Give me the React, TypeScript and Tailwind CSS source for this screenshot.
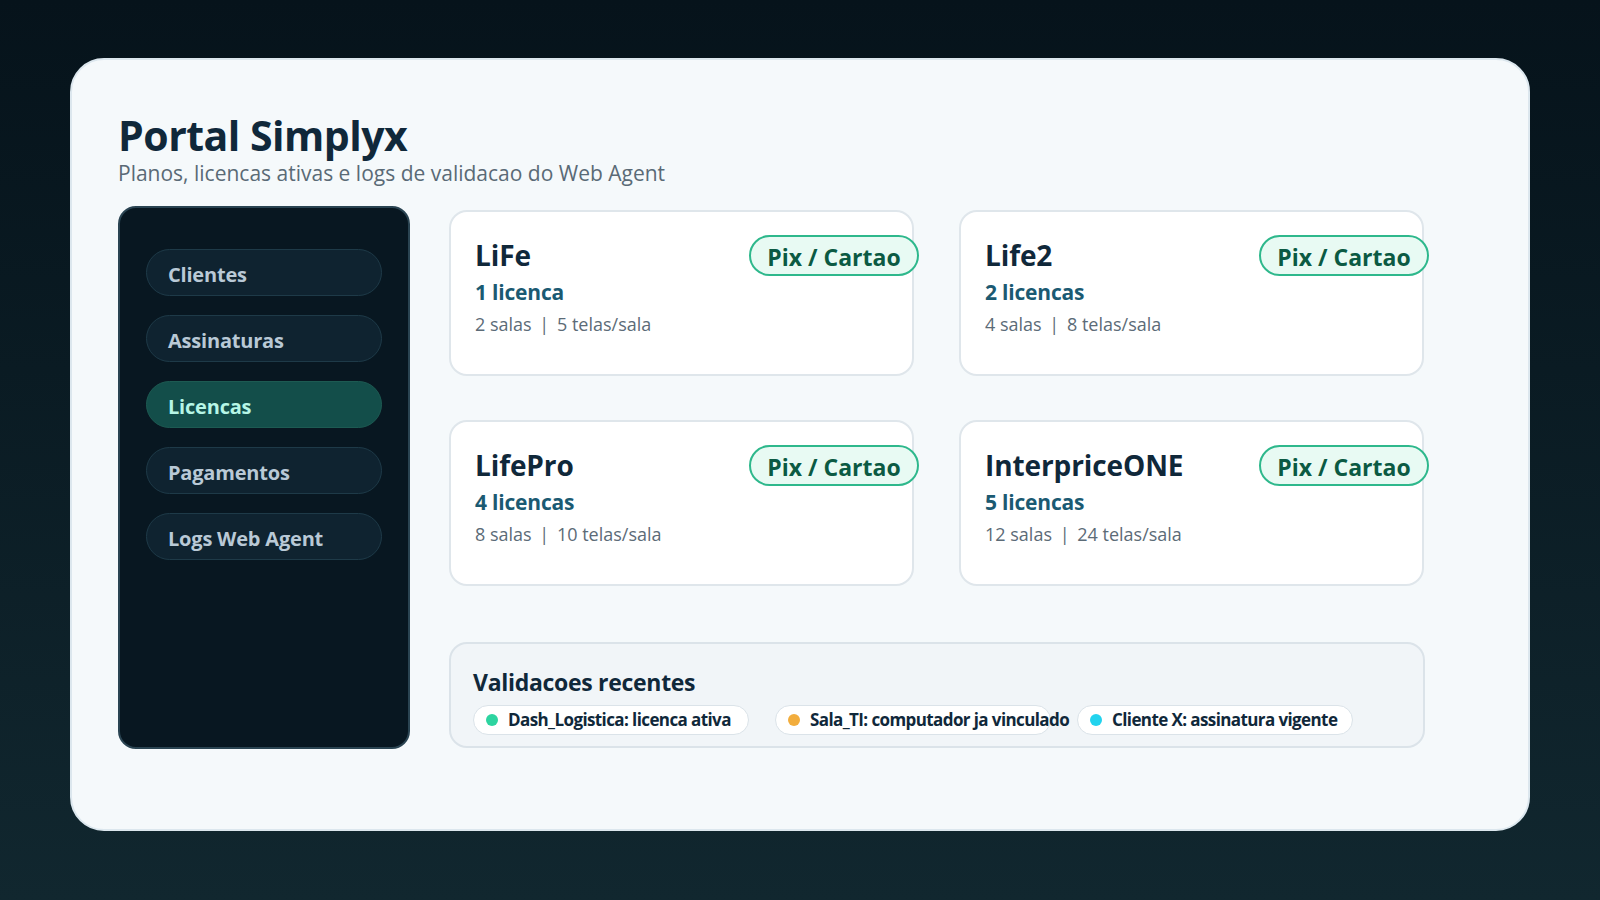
import React from 'react';

const FONT = { fontFamily: '"Open Sans", "Noto Sans", sans-serif' };

const navItems = ['Clientes', 'Assinaturas', 'Licencas', 'Pagamentos', 'Logs Web Agent'];

const plans = [
    { name: 'LiFe', licenses: '1 licenca', rooms: '2 salas', screens: '5 telas/sala' },
    { name: 'Life2', licenses: '2 licencas', rooms: '4 salas', screens: '8 telas/sala' },
    { name: 'LifePro', licenses: '4 licencas', rooms: '8 salas', screens: '10 telas/sala' },
    { name: 'InterpriceONE', licenses: '5 licencas', rooms: '12 salas', screens: '24 telas/sala' },
];

const validations = [
    { text: 'Dash_Logistica: licenca ativa', dot: 'bg-[#2dd4a0]' },
    { text: 'Sala_TI: computador ja vinculado', dot: 'bg-[#f2ad3d]' },
    { text: 'Cliente X: assinatura vigente', dot: 'bg-[#22d3ee]' },
];

const PlanCard: React.FC<{ plan: typeof plans[number] }> = ({ plan }) => (
    <div className="relative h-[166px] rounded-[18px] border-2 border-[#dfe6eb] bg-white pl-[24px] pt-[24px]">
        <div className="text-[28px] font-bold leading-[38px] tracking-[-0.1px] text-[#10283a]">{plan.name}</div>
        <div className="mt-[3px] text-[21px] font-bold leading-[30px] tracking-[-0.2px] text-[#1b5a72]">{plan.licenses}</div>
        <div className="mt-[4px] text-[18px] leading-[26px] text-[#5c6b77]">
            {plan.rooms} <span className="mx-[3px]">|</span> {plan.screens}
        </div>
        <div className="absolute right-[-7px] top-[23px] flex h-[41px] w-[170px] items-center justify-center rounded-full border-2 border-[#2eb88c] bg-[#e8faf3] pt-[4px] text-[23px] font-bold text-[#0b5a43]">
            Pix / Cartao
        </div>
    </div>
);

export default function App() {
    return (
        <div
            className="min-h-screen w-full bg-gradient-to-b from-[#06131b] to-[#11272f] px-[70px] pt-[58px] pb-[70px]"
            style={FONT}
        >
            <div className="h-[773px] rounded-[34px] border-2 border-[#dce7ee] bg-[#f5f9fb] pl-[46px] pt-[53px]">
                <h1 className="text-[41px] font-bold leading-[44px] tracking-[-0.5px] text-[#10283a]">Portal Simplyx</h1>
                <p className="mt-[3px] text-[21px] leading-[26px] text-[#5a6a76]">
                    Planos, licencas ativas e logs de validacao do Web Agent
                </p>

                <div className="mt-[20px] flex gap-[39px]">
                    <aside className="flex h-[543px] w-[292px] flex-col gap-[19px] rounded-[18px] border-2 border-[#2a4452] bg-[#081721] px-[26px] pt-[41px]">
                        {navItems.map(item => {
                            const active = item === 'Licencas';
                            return (
                                <div
                                    key={item}
                                    className={
                                        active
                                            ? 'flex h-[47px] items-center rounded-full border border-[#1d5a52] bg-[#134e4a] pl-[21px] pt-[5px] text-[20px] font-bold tracking-[-0.2px] text-[#b6f6e6]'
                                            : 'flex h-[47px] items-center rounded-full border border-[#1e3a48] bg-[#0f2330] pl-[21px] pt-[5px] text-[20px] font-bold tracking-[-0.2px] text-[#b9c9d6]'
                                    }
                                >
                                    {item}
                                </div>
                            );
                        })}
                    </aside>

                    <main className="w-[976px] pt-[4px]">
                        <div className="grid grid-cols-[465px_465px] gap-x-[45px] gap-y-[44px]">
                            {plans.map(p => (
                                <PlanCard key={p.name} plan={p} />
                            ))}
                        </div>

                        <section className="mt-[56px] h-[106px] rounded-[18px] border-2 border-[#dbe3e9] bg-[#f1f5f8] pl-[22px] pt-[23px]">
                            <h2 className="text-[23px] font-bold leading-[30px] tracking-[-0.3px] text-[#10283a]">Validacoes recentes</h2>
                            <div className="mt-[8px] flex gap-[26px]">
                                {validations.map(v => (
                                    <div
                                        key={v.text}
                                        className="flex h-[30px] w-[276px] shrink-0 items-center gap-[10px] whitespace-nowrap rounded-full border border-[#dbe3e9] bg-white pl-[12px] text-[17px] font-bold tracking-[-0.6px] text-[#10283a]"
                                    >
                                        <span className={`h-[12px] w-[12px] shrink-0 rounded-full ${v.dot}`} />
                                        {v.text}
                                    </div>
                                ))}
                            </div>
                        </section>
                    </main>
                </div>
            </div>
        </div>
    );
}
